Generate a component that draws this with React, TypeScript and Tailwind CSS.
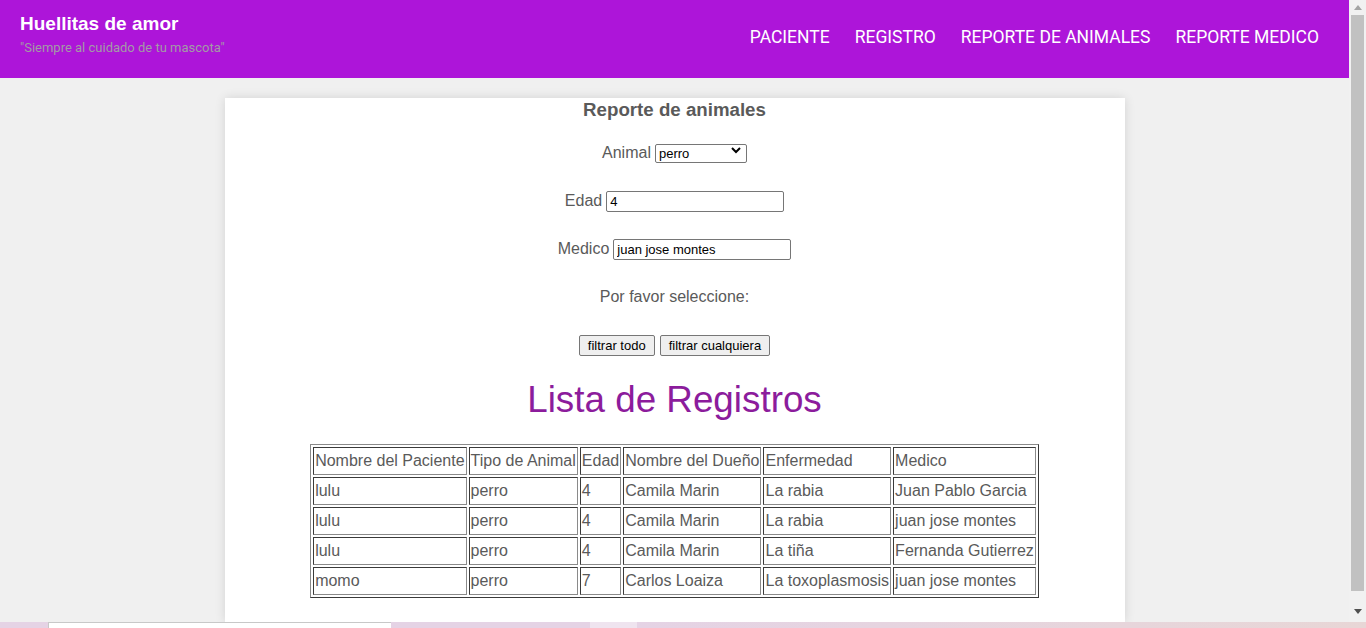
import { useState } from "react";

const registros = [
  { paciente: "lulu", tipo: "perro", edad: "4", dueno: "Camila Marin", enfermedad: "La rabia", medico: "Juan Pablo Garcia" },
  { paciente: "lulu", tipo: "perro", edad: "4", dueno: "Camila Marin", enfermedad: "La rabia", medico: "juan jose montes" },
  { paciente: "lulu", tipo: "perro", edad: "4", dueno: "Camila Marin", enfermedad: "La tiña", medico: "Fernanda Gutierrez" },
  { paciente: "momo", tipo: "perro", edad: "7", dueno: "Carlos Loaiza", enfermedad: "La toxoplasmosis", medico: "juan jose montes" },
];

const navItems = ["PACIENTE", "REGISTRO", "REPORTE DE ANIMALES", "REPORTE MEDICO"];

function Header() {
  return (
    <header className="h-[78px] bg-[#ad15d9] flex items-center justify-between pl-5 pr-[30px] shrink-0">
      <div className="flex flex-col pb-[6px]">
        <div className="font-['Liberation_Sans',Arial,sans-serif] font-bold text-[19px] leading-[20px] text-white">
          Huellitas de amor
        </div>
        <div className="mt-[4px] font-['Roboto',sans-serif] text-[13px] leading-[20px] text-[#a39aa6]">
          "Siempre al cuidado de tu mascota"
        </div>
      </div>
      <nav className="flex items-center gap-[25px] font-['Roboto',sans-serif] text-[17.5px] text-white pb-[3px]">
        {navItems.map((item) => (
          <a key={item} className="cursor-pointer">
            {item}
          </a>
        ))}
      </nav>
    </header>
  );
}

function Scrollbar() {
  return (
    <div className="w-[17px] bg-[#f1f1f1] flex flex-col items-center shrink-0">
      <div className="h-[15px] flex items-center justify-center">
        <svg width="8" height="5" viewBox="0 0 8 5">
          <path d="M0 5 L4 0 L8 5 Z" fill="#a3a3a3" />
        </svg>
      </div>
      <div className="w-[13px] flex-1 bg-[#c1c1c1] mb-[1px]" />
      <div className="h-[30px] flex items-end justify-center pb-[8px]">
        <svg width="8" height="5" viewBox="0 0 8 5">
          <path d="M0 0 L8 0 L4 5 Z" fill="#505050" />
        </svg>
      </div>
    </div>
  );
}

const cellClass =
  "border border-t-[#3a3a3a] border-l-[#3a3a3a] border-b-[#8a8a8a] border-r-[#8a8a8a] px-[1px] py-[1px] font-normal whitespace-nowrap";

function ReporteCard() {
  const [animal, setAnimal] = useState("perro");
  const [edad, setEdad] = useState("4");
  const [medico, setMedico] = useState("juan jose montes");

  return (
    <div className="mx-auto mt-5 w-[900px] flex-1 bg-white shadow-[0_0_10px_rgba(0,0,0,0.12)] text-[#5a5a5a] font-['Liberation_Sans',Arial,sans-serif]">
      <div className="h-[31px] pt-[1px] flex justify-center">
        <h3 className="text-[18.7px] leading-[22px] font-bold">Reporte de animales</h3>
      </div>

      <div className="h-[48px] flex items-center justify-center gap-1 text-[16px]">
        <label>Animal</label>
        <div className="relative">
          <select
            value={animal}
            onChange={(e) => setAnimal(e.target.value)}
            className="appearance-none w-[92px] h-[19px] border border-[#767676] rounded-[2px] bg-white text-black text-[13px] leading-[17px] pl-[3px] font-['Liberation_Sans',Arial,sans-serif]"
          >
            <option>perro</option>
            <option>gato</option>
          </select>
          <svg
            className="absolute right-[6px] top-[6px] pointer-events-none"
            width="10"
            height="7"
            viewBox="0 0 10 7"
          >
            <path d="M1 1 L5 5 L9 1" fill="none" stroke="#000" strokeWidth="2" />
          </svg>
        </div>
      </div>

      <div className="h-[48px] flex items-center justify-center gap-1 text-[16px]">
        <label>Edad</label>
        <input
          value={edad}
          onChange={(e) => setEdad(e.target.value)}
          className="w-[178px] h-[21px] border border-[#767676] rounded-[2px] text-black text-[13px] px-[3px] outline-none"
        />
      </div>

      <div className="h-[48px] flex items-center justify-center gap-1 text-[16px]">
        <label>Medico</label>
        <input
          value={medico}
          onChange={(e) => setMedico(e.target.value)}
          className="w-[178px] h-[21px] border border-[#767676] rounded-[2px] text-black text-[13px] px-[3px] outline-none"
        />
      </div>

      <div className="h-[48px] flex items-center justify-center text-[16px]">
        Por favor seleccione:
      </div>

      <div className="h-[48px] flex items-center justify-center gap-[5px] text-[13px] text-black">
        <button className="h-[21px] px-[8px] bg-[#efefef] border border-[#767676] rounded-[2px]">
          filtrar todo
        </button>
        <button className="h-[21px] px-[8px] bg-[#efefef] border border-[#767676] rounded-[2px]">
          filtrar cualquiera
        </button>
      </div>

      <div className="h-[62px] flex items-center justify-center">
        <h1 className="text-[36.8px] leading-[44px] text-[#8c1c9c]">Lista de Registros</h1>
      </div>

      <div className="mt-[13px] flex justify-center">
        <table className="border-separate border-spacing-[2px] border border-t-[#8a8a8a] border-l-[#8a8a8a] border-b-[#3a3a3a] border-r-[#3a3a3a] text-[16px] leading-[24px]">
          <thead>
            <tr>
              {["Nombre del Paciente", "Tipo de Animal", "Edad", "Nombre del Dueño", "Enfermedad", "Medico"].map((h) => (
                <td key={h} className={cellClass}>
                  {h}
                </td>
              ))}
            </tr>
          </thead>
          <tbody>
            {registros.map((r, i) => (
              <tr key={i}>
                {[r.paciente, r.tipo, r.edad, r.dueno, r.enfermedad, r.medico].map((v, j) => (
                  <td key={j} className={cellClass}>
                    {v}
                  </td>
                ))}
              </tr>
            ))}
          </tbody>
        </table>
      </div>
    </div>
  );
}

export default function App() {
  return (
    <div className="h-[628px] w-[1366px] flex flex-col overflow-hidden">
      <div className="h-[622px] flex">
        <div className="flex-1 flex flex-col bg-[#f0f0f0] overflow-hidden">
          <Header />
          <ReporteCard />
        </div>
        <Scrollbar />
      </div>
      <div className="h-[6px] flex bg-[#e5d3e5]">
        <div className="w-[48px]" />
        <div className="w-[343px] bg-white border-t border-l border-[#c8c8c8]" />
        <div className="w-[199px]" />
        <div className="w-[47px] bg-[#efe4ef]" />
        <div className="flex-1 bg-gradient-to-r from-[#e5d3e5] to-[#e8d6d6]" />
      </div>
    </div>
  );
}
